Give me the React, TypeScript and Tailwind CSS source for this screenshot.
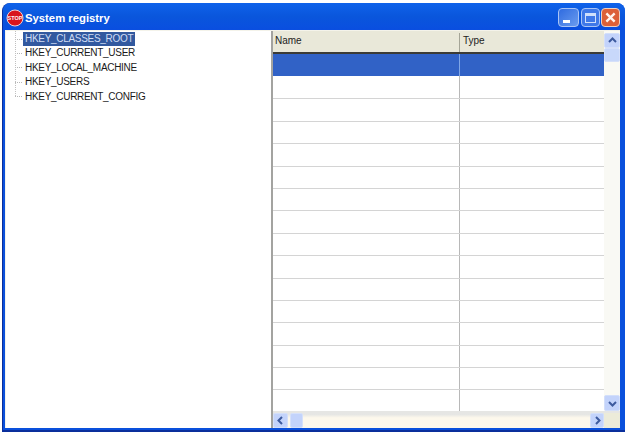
const keys = ["HKEY_CLASSES_ROOT", "HKEY_CURRENT_USER", "HKEY_LOCAL_MACHINE", "HKEY_USERS", "HKEY_CURRENT_CONFIG"];
const rows = Array.from({ length: 13 }, (_, i) => i);

function ArrowButton({ d, className }: { d: string; className: string }) {
    return (
        <div className={`flex shrink-0 items-center justify-center rounded-[2px] border border-[#d3dffa] bg-[#c3d3fb] ${className}`}>
            <svg width="9" height="9" viewBox="0 0 9 9" fill="none" stroke="#3d5a9e" strokeWidth="2">
                <path d={d} />
            </svg>
        </div>
    );
}

function Tree() {
    return (
        <div className="relative w-[265px] shrink-0 bg-white pl-[9px] pt-px text-[10px] leading-[14.4px] tracking-[-0.3px] text-[#1a1a1a]">
            <div className="absolute left-[9px] top-0 h-[65px] w-px border-l border-dotted border-[#c0c0c0]" />
            {keys.map((key, i) => (
                <div key={key} className="flex h-[14.4px] items-center">
                    <div className="mr-px w-[7px] border-t border-dotted border-[#b8b8b8]" />
                    <span className={i === 0 ? "bg-[#32599f] pl-[2px] pr-[2px] text-[#cfdcf4]" : "pl-[2px]"}>{key}</span>
                </div>
            ))}
        </div>
    );
}

function Table() {
    return (
        <div className="flex min-w-0 flex-1 flex-col border-l-2 border-[#a3a3a0] bg-white">
            <div className="flex min-h-0 flex-1">
                <div className="flex min-w-0 flex-1 flex-col">
                    <div className="flex h-[23px] shrink-0 border-b-2 border-[#3b3b36] bg-[#e9e8d9] pt-[2px] text-[10px] text-[#222]">
                        <div className="w-[187px] border-r border-[#a5a597] pl-[2px]">Name</div>
                        <div className="pl-[3px]">Type</div>
                    </div>
                    <div className="flex h-[22px] shrink-0 bg-[#3162c6]">
                        <div className="w-[187px] border-r border-[#7fa6e6]" />
                    </div>
                    <div className="flex h-[23.4px] shrink-0 border-b border-[#d4d4d4]">
                        <div className="w-[187px] border-r border-[#b8b8b8]" />
                    </div>
                    {rows.map((row) => (
                        <div key={row} className="flex h-[22.4px] shrink-0 border-b border-[#d4d4d4]">
                            <div className="w-[187px] border-r border-[#b8b8b8]" />
                        </div>
                    ))}
                    <div className="flex min-h-0 flex-1">
                        <div className="w-[187px] border-r border-[#b8b8b8]" />
                    </div>
                </div>
                <div className="flex w-[16px] shrink-0 flex-col bg-[#f9f9f4] pt-[2px]">
                    <ArrowButton d="M1 6l3.5-3.5L8 6" className="h-[15px] w-[16px]" />
                    <div className="h-[14px] w-[16px] rounded-[2px] border border-[#d5e0fa] bg-[#c8d8fa]" />
                    <div className="flex-1" />
                    <ArrowButton d="M1 3l3.5 3.5L8 3" className="h-[16px] w-[16px]" />
                </div>
            </div>
            <div className="flex h-[17px] shrink-0 bg-gradient-to-b from-[#e6e6e4] from-20% to-[#fdf8ec] to-40% pt-[2px]">
                <ArrowButton d="M6 1L2.5 4.5 6 8" className="h-[15px] w-[15px]" />
                <div className="ml-[2px] h-[15px] w-[13px] rounded-[2px] border border-[#d5e0fa] bg-[#c3d3fb]" />
                <div className="flex-1" />
                <ArrowButton d="M3 1l3.5 3.5L3 8" className="h-[15px] w-[14px]" />
                <div className="w-[16px] bg-[#ecebd9]" />
            </div>
        </div>
    );
}

export default function App() {
    return (
        <div className="h-[434px] w-[628px] overflow-hidden bg-white pb-[2px] pl-[2px] pr-[3px] pt-[3px] font-['Liberation_Sans',sans-serif]">
            <div className="flex h-full flex-col rounded-t-[8px] border-b-2 border-l border-[#0a2f9c] bg-[#0a50dc]">
                <div className="flex h-[27px] shrink-0 items-center rounded-t-[8px] bg-gradient-to-b from-[#0f62ea] via-[#0a56dc] to-[#0a4ee0] pl-[3px] pr-[5px]">
                    <svg width="18" height="18" viewBox="0 0 18 18" className="mt-[3px] shrink-0">
                        <circle cx="9" cy="9" r="8" fill="#d8141c" stroke="#f0d0d0" strokeWidth="1" />
                        <text x="9" y="11" textAnchor="middle" fontSize="5.5" fontWeight="700" fill="#fff2f2" fontFamily="Liberation Sans, sans-serif">STOP</text>
                    </svg>
                    <span className="ml-[1px] mt-[4px] flex-1 text-[11.3px] font-bold text-white">System registry</span>
                    <div className="flex gap-px pt-[2px]">
                        <div className="relative mr-px h-[19px] w-[21px] overflow-hidden rounded-[4px] border border-[#a9c4f5] bg-gradient-to-br from-[#2f6be0] to-[#6a9bee]">
                            <div className="absolute bottom-[3px] left-[4px] h-[3px] w-[7px] bg-white" />
                        </div>
                        <div className="flex h-[19px] w-[19px] items-center justify-center rounded-[4px] border border-[#a9c4f5] bg-[#3f78e8]">
                            <div className="h-[10px] w-[11px] border border-t-[3px] border-[#cfdffb]" />
                        </div>
                        <div className="flex h-[19px] w-[19px] items-center justify-center rounded-[4px] border border-[#eed0c0] bg-[#dc6038]">
                            <svg width="11" height="11" viewBox="0 0 12 12" stroke="#fff4ee" strokeWidth="2.6">
                                <path d="M1.5 1.5l9 9M10.5 1.5l-9 9" />
                            </svg>
                        </div>
                    </div>
                </div>
                <div className="ml-[2px] mr-[5px] mb-[2px] flex min-h-0 flex-1 overflow-hidden border-l border-[#f4f3ea] bg-[#f4f3ea] pt-px">
                    <Tree />
                    <Table />
                </div>
            </div>
        </div>
    );
}
